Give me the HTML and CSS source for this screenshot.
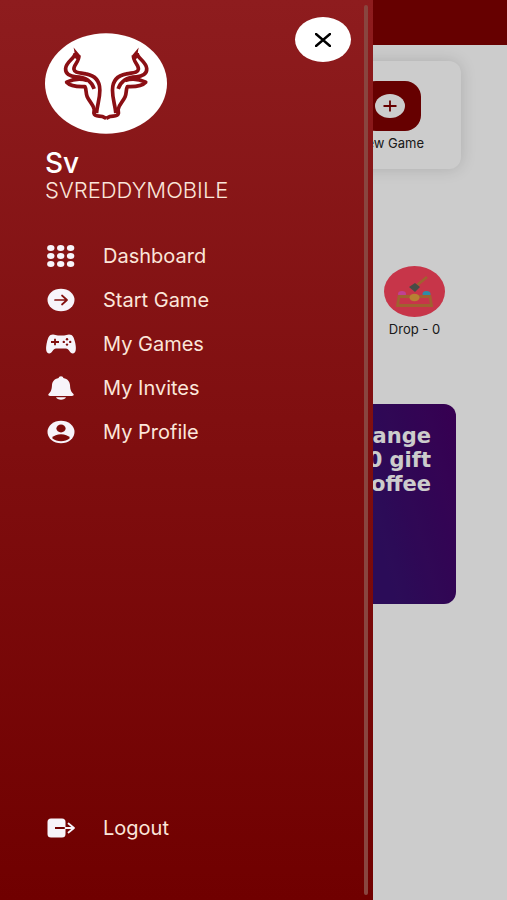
FILE: index.html
```html
<!DOCTYPE html>
<html lang="en">
<head>
    <meta charset="UTF-8">
    <meta name="viewport" content="width=device-width, initial-scale=1.0">
    <title>Dashboard</title>
    <link rel="stylesheet" href="styles.css">
</head>
<body>
    <div class="page">
        <header class="topbar"></header>
        <main class="content">
            <section class="actions">
                <button type="button" class="action">
                    <span class="action-tile">
                        <svg viewBox="0 0 30 24" width="30" height="24" aria-hidden="true">
                            <ellipse cx="15" cy="12" rx="15" ry="12" fill="#fff"/>
                            <path d="M8.500 12h13M15 6.500v11" stroke="#800000" stroke-width="1.800"/>
                        </svg>
                    </span>
                    New Game
                </button>
            </section>

            <section class="stats">
                <div class="stat">
                    <svg viewBox="0 0 61 51" width="61" height="51" aria-hidden="true">
                        <ellipse cx="30.500" cy="25.500" rx="30.500" ry="25.500" fill="#f9435c"/>
                        <path d="M32 20L43 11" stroke="#c87a3c" stroke-width="2.800"/>
                        <path d="M25 21l6-4 5 4-5 5z" fill="#5a6058"/>
                        <ellipse cx="18" cy="28" rx="4" ry="3" fill="#f050b8"/>
                        <ellipse cx="42.500" cy="28" rx="4" ry="3" fill="#3aafd0"/>
                        <path d="M15 30.500h31L47.500 39.500h-34z" fill="none" stroke="#c87a3c" stroke-width="2.800"/>
                        <ellipse cx="30.500" cy="31.500" rx="5" ry="3.800" fill="#e6a040"/>
                    </svg>
                    Drop - 0
                </div>
            </section>

            <section class="promo">
                <p>Exchange<br>100 gift<br>coffee</p>
            </section>
        </main>
    </div>

    <div class="backdrop"></div>

    <aside class="drawer">
        <div class="drawer-head">
            <svg class="avatar" viewBox="45 39 367 302" width="122" height="101" role="img" aria-label="Bull logo">
                <ellipse cx="228.500" cy="190" rx="183.500" ry="151" fill="#fff"/>
                <g id="half" fill="none" stroke="#8b0f14" stroke-width="11" stroke-linejoin="round">
                    <path d="M131 82L150 104C152 110 150 116 146 120L132 112C135 103 134 94 131 82Z" fill="#8b0f14" stroke="none"/>
                    <path d="M136 98C136 114 108 124 107 145C106 161 120 169 138 170C166 171 184 180 193 206"/>
                    <path d="M147 106C149 124 130 134 132 147C134 159 150 157 168 161C196 166 210 184 210 210C210 238 202 254 200 279"/>
                    <path d="M172 181C150 173 127 178 110 186C120 197 142 200 165 199C170 207 167 218 172 230C178 244 190 252 193 268L192 279C195 292 208 286 217 289L229 295"/>
                </g>
                <use href="#half" transform="matrix(-1 0 0 1 458 0)"/>
            </svg>
            <button type="button" class="close" aria-label="Close menu">
                <svg viewBox="0 0 16 14" width="16" height="14" aria-hidden="true">
                    <path d="M1 1l14 12M15 1L1 13" stroke="#000" stroke-width="2.400" stroke-linecap="round"/>
                </svg>
            </button>
        </div>
        <h1 class="name">Sv</h1>
        <p class="handle">SVREDDYMOBILE</p>

        <nav class="menu">
            <a href="#dashboard">
                <svg viewBox="0 0 32 24" width="32" height="24" aria-hidden="true">
                    <g fill="currentColor">
                        <ellipse cx="5.800" cy="4" rx="3.700" ry="3"/><ellipse cx="15.700" cy="4" rx="3.700" ry="3"/><ellipse cx="25.600" cy="4" rx="3.700" ry="3"/>
                        <ellipse cx="5.800" cy="12" rx="3.700" ry="3"/><ellipse cx="15.700" cy="12" rx="3.700" ry="3"/><ellipse cx="25.600" cy="12" rx="3.700" ry="3"/>
                        <ellipse cx="5.800" cy="20" rx="3.700" ry="3"/><ellipse cx="15.700" cy="20" rx="3.700" ry="3"/><ellipse cx="25.600" cy="20" rx="3.700" ry="3"/>
                    </g>
                </svg>
                Dashboard
            </a>
            <a href="#start">
                <svg viewBox="0 0 32 24" width="32" height="24" aria-hidden="true">
                    <ellipse cx="16" cy="12" rx="13.500" ry="11.300" fill="currentColor"/>
                    <path d="M10 12h12M17 7.500L22 12l-5 4.500" fill="none" stroke="#83100f" stroke-width="1.700" stroke-linecap="round" stroke-linejoin="round"/>
                </svg>
                Start Game
            </a>
            <a href="#games">
                <svg viewBox="0 0 32 24" width="32" height="24" aria-hidden="true">
                    <path d="M8 2.500C10 2.500 11 3.500 13 3.500H19C21 3.500 22 2.500 24 2.500C28 2.500 29 6 30 10C31 14 32 21 28 21.500C25 21.800 24 16.500 21 16.500H11C8 16.500 7 21.800 4 21.500C0 21 1 14 2 10C3 6 4 2.500 8 2.500Z" fill="currentColor"/>
                    <path d="M6 10h8M10 6.800v6.400" stroke="#800e0d" stroke-width="1.800"/>
                    <g fill="#800e0d"><circle cx="22" cy="7.200" r="1.200"/><circle cx="22" cy="12.600" r="1.200"/><circle cx="18.800" cy="9.900" r="1.200"/><circle cx="25.200" cy="9.900" r="1.200"/></g>
                </svg>
                My Games
            </a>
            <a href="#invites">
                <svg viewBox="0 0 32 24" width="32" height="24" aria-hidden="true">
                    <path d="M16 0.200C17.500 0.200 18.200 1 18.300 2C23 3 24.800 6 25 9C25.300 14 26 15.300 28 17.500C29.500 19 28.500 20 27 20H5C3.500 20 2.500 19 4 17.500C6 15.300 6.700 14 7 9C7.200 6 9 3 13.700 2C13.800 1 14.500 0.200 16 0.200ZM11 21.300H21C20 24.500 12 24.500 11 21.300Z" fill="currentColor"/>
                </svg>
                My Invites
            </a>
            <a href="#profile">
                <svg viewBox="0 0 32 24" width="32" height="24" aria-hidden="true">
                    <ellipse cx="16" cy="12" rx="13.500" ry="11.300" fill="currentColor"/>
                    <ellipse cx="16" cy="8.500" rx="4.600" ry="3.900" fill="#7d0c0b"/>
                    <path d="M7 18C9 15.500 12 14.300 16 14.300C20 14.300 23 15.500 25 18C20 22.300 12 22.300 7 18Z" fill="#7d0c0b"/>
                </svg>
                My Profile
            </a>
        </nav>

        <div class="menu menu-bottom">
            <a href="#logout">
                <svg viewBox="0 0 32 24" width="32" height="24" aria-hidden="true">
                    <rect x="2.500" y="2.500" width="18" height="19" rx="3.500" fill="currentColor"/>
                    <path d="M10 12h10.500" stroke="#720202" stroke-width="2"/>
                    <path d="M20.500 12H29M23.500 7.500L29 12l-5.500 4.500" fill="none" stroke="currentColor" stroke-width="1.800" stroke-linecap="round" stroke-linejoin="round"/>
                </svg>
                Logout
            </a>
        </div>
    </aside>
</body>
</html>
```
FILE: styles.css
```css
:root {
    --maroon: #800000;
    --drawer-text: #fbe6da;
}

* {
    box-sizing: border-box;
    margin: 0;
    padding: 0;
}

body {
    font-family: Inter, 'Liberation Sans', sans-serif;
    background: #fff;
    color: #222;
    min-height: 100vh;
}

button {
    border: none;
    background: none;
    font-family: inherit;
    cursor: pointer;
}

.topbar {
    height: 45px;
    background: var(--maroon);
}

.content {
    padding: 16px 46px;
}

.actions {
    display: flex;
    justify-content: flex-end;
    padding: 20px 37px 18px;
    border-radius: 12px;
    box-shadow: 0 0 16px rgba(0, 0, 0, 0.15);
}

.action, .stat {
    display: flex;
    flex-direction: column;
    align-items: center;
    gap: 4px;
    font-size: 13px;
    line-height: 16px;
    color: #222;
}

.action-tile {
    display: flex;
    align-items: center;
    justify-content: center;
    width: 61px;
    height: 50px;
    border-radius: 16px;
    background: var(--maroon);
}

.stats {
    display: flex;
    justify-content: flex-end;
    padding: 97px 16px 0;
}

.promo {
    min-height: 200px;
    margin: 67px 5px 0;
    padding: 20px 25px;
    border-radius: 12px;
    background: linear-gradient(75deg, #36106e 75%, #450066);
    color: #fff;
    font-family: 'DejaVu Sans', sans-serif;
    font-size: 21px;
    font-weight: 700;
    line-height: 24px;
    text-align: right;
}

.backdrop {
    position: fixed;
    inset: 0;
    background: rgba(0, 0, 0, 0.2);
}

.drawer {
    position: fixed;
    top: 0;
    bottom: 0;
    left: 0;
    width: 73.5%;
    display: flex;
    flex-direction: column;
    padding: 17px 22px 60px 45px;
    background: linear-gradient(#8e1c1e, #700000);
    color: var(--drawer-text);
}

/* scroll thumb along the drawer edge */
.drawer::after {
    content: '';
    position: absolute;
    top: 5px;
    bottom: 5px;
    right: 5px;
    width: 4px;
    border-radius: 2px;
    background: #89453f;
}

.drawer-head {
    display: flex;
    justify-content: space-between;
    align-items: flex-start;
}

.avatar {
    margin-top: 16px;
}

.close {
    display: flex;
    align-items: center;
    justify-content: center;
    width: 56px;
    height: 45px;
    border-radius: 50%;
    background: #fff;
}

.name {
    margin-top: 14px;
    font-size: 28px;
    font-weight: 500;
    line-height: 30px;
    color: #fff;
}

.handle {
    font-size: 22px;
    font-weight: 300;
    line-height: 24px;
}

.menu {
    display: flex;
    flex-direction: column;
    gap: 20px;
    margin-top: 42px;
}

.menu-bottom {
    margin-top: auto;
}

.menu a {
    display: flex;
    align-items: center;
    gap: 26px;
    font-size: 20px;
    line-height: 24px;
    color: inherit;
    text-decoration: none;
}

.menu svg {
    color: #f7f4fa;
}
```
